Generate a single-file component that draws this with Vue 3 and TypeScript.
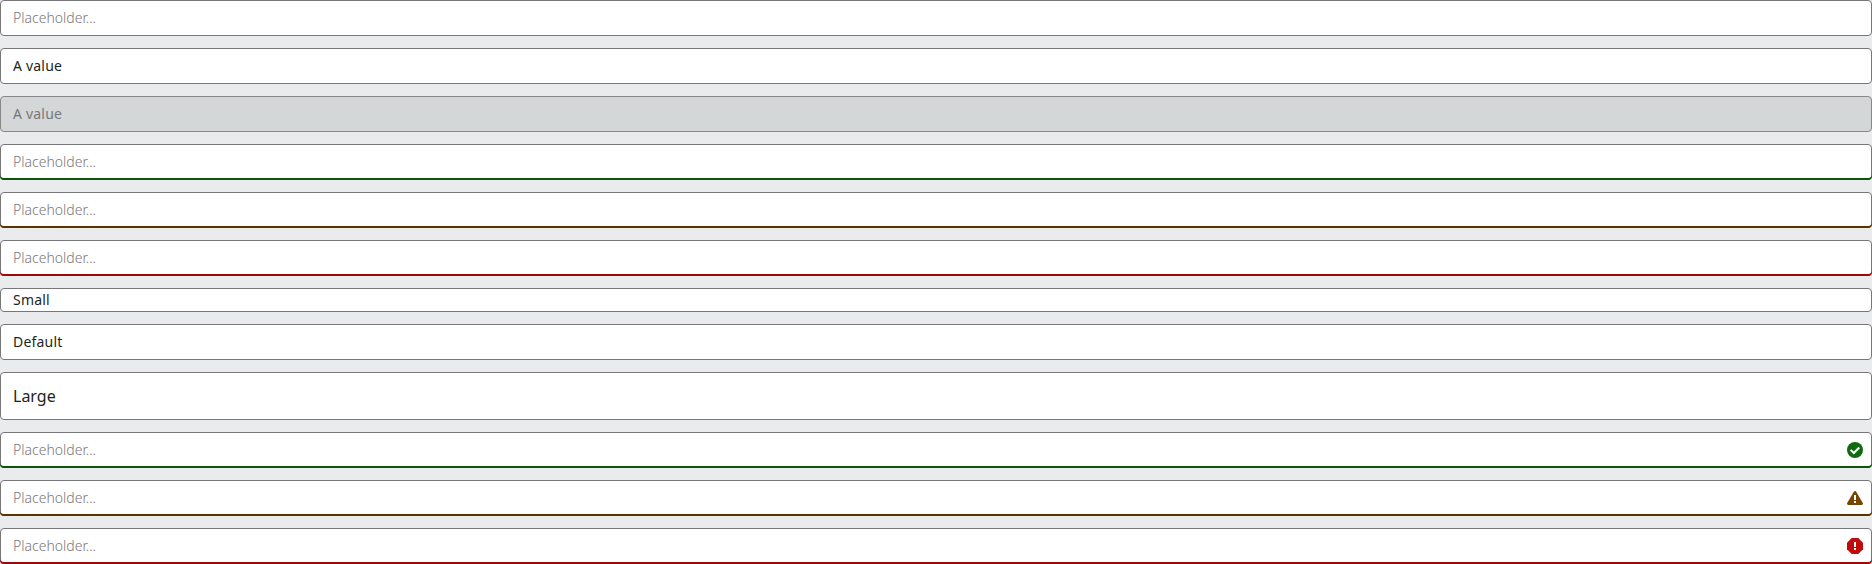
<script setup lang="ts">
interface Field {
  value?: string
  size?: 'small' | 'large'
  status?: 'success' | 'warning' | 'error'
  disabled?: boolean
  icon?: boolean
}

const fields: Field[] = [
  {},
  { value: 'A value' },
  { value: 'A value', disabled: true },
  { status: 'success' },
  { status: 'warning' },
  { status: 'error' },
  { value: 'Small', size: 'small' },
  { value: 'Default' },
  { value: 'Large', size: 'large' },
  { status: 'success', icon: true },
  { status: 'warning', icon: true },
  { status: 'error', icon: true },
]
</script>

<template>
  <main class="stack">
    <div
      v-for="(field, index) in fields"
      :key="index"
      class="field"
      :class="[field.size, field.status, { disabled: field.disabled }]"
    >
      <input
        class="control"
        type="text"
        placeholder="Placeholder…"
        :value="field.value"
        :disabled="field.disabled"
      />
      <svg v-if="field.icon" class="icon" viewBox="0 0 16 16" aria-hidden="true">
        <template v-if="field.status === 'success'">
          <circle cx="8" cy="8" r="8" fill="currentColor" />
          <path d="M3.7 7.9 6.8 11 12.3 5.5" fill="none" stroke="#fff" stroke-width="2" />
        </template>
        <template v-else-if="field.status === 'warning'">
          <path
            d="M8 1c.5 0 .9.2 1.2.7l6.6 11.2c.5.9-.1 2.1-1.2 2.1H1.4C.3 15-.3 13.8.2 12.9L6.800 1.700C7.100 1.200 7.500 1 8 1Z"
            fill="currentColor"
          />
          <path d="M7 5h2v5H7zM7 11h2v2H7z" fill="#fff" />
        </template>
        <template v-else>
          <path d="M4.7 0h6.6L16 4.700v6.600L11.300 16H4.700L0 11.300V4.700Z" fill="currentColor" />
          <path d="M7 4h2v5H7zM7 10h2v2H7z" fill="#fff" />
        </template>
      </svg>
    </div>
  </main>
</template>

<style>
body {
  background: #e9ebec;
}
</style>

<style scoped>
.stack {
  display: flex;
  flex-direction: column;
  gap: 12px;
  font-family: 'Noto Sans', sans-serif;
}

.field {
  display: flex;
  align-items: center;
  box-sizing: border-box;
  height: 36px;
  padding: 0 8px 0 12px;
  border: 1px solid #77777a;
  border-radius: 4px;
  background: #fff;
  font-size: 14px;
  color: #1e1f21;
}

.small {
  height: 24px;
}

.large {
  height: 48px;
  font-size: 16px;
}

.disabled {
  background: #d3d7d8;
  border-color: #88888b;
}

.control {
  flex: 1;
  min-width: 0;
  height: 100%;
  padding: 0 0 2px;
  border: 0;
  outline: 0;
  background: transparent;
  font: inherit;
  letter-spacing: 0.2px;
  color: inherit;
}

.large .control {
  padding: 0;
  letter-spacing: normal;
}

.control::placeholder {
  color: #77777a;
  font-weight: 300;
  letter-spacing: normal;
  opacity: 1;
}

.control:disabled {
  color: #77777a;
}

.success,
.warning,
.error {
  position: relative;
}

.success::after,
.warning::after,
.error::after {
  content: '';
  position: absolute;
  inset: -1px;
  border-radius: 4px;
  box-shadow: inset 0 -2px 0 var(--line);
  pointer-events: none;
}

.success {
  --line: #0c540c;
  --icon: #106b10;
}

.warning {
  --line: #5a3500;
  --icon: #784600;
}

.error {
  --line: #9b0a0a;
  --icon: #c20a0a;
}

.icon {
  flex: none;
  width: 16px;
  height: 16px;
  color: var(--icon);
}
</style>
